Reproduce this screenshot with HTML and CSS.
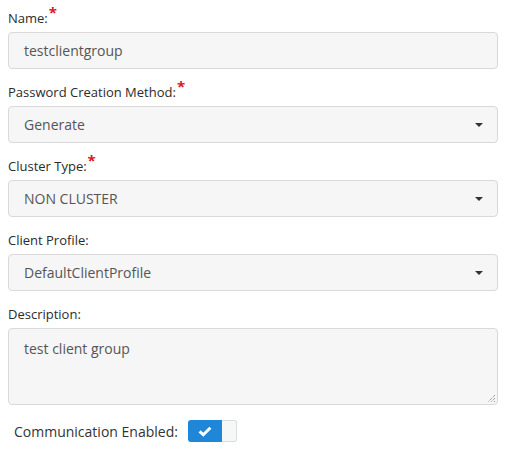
FILE: index.html
```html
<!DOCTYPE html>
<html>
<head>
<meta charset="utf-8">
<link rel="stylesheet" href="styles.css">
</head>
<body>
<form class="form">
  <div class="group">
    <label class="label">Name:<span class="req">*</span></label>
    <div class="field">testclientgroup</div>
  </div>
  <div class="group">
    <label class="label">Password Creation Method:<span class="req">*</span></label>
    <div class="field select">Generate<span class="caret"></span></div>
  </div>
  <div class="group">
    <label class="label">Cluster Type:<span class="req">*</span></label>
    <div class="field select">NON CLUSTER<span class="caret"></span></div>
  </div>
  <div class="group">
    <label class="label">Client Profile:</label>
    <div class="field select">DefaultClientProfile<span class="caret"></span></div>
  </div>
  <div class="group">
    <label class="label">Description:</label>
    <div class="field area">test client group
      <svg class="grip" width="9" height="9" viewBox="0 0 9 9"><path d="M8 1L1 8M8 4L4 8M8 7L7 8" stroke="#777" stroke-width="1" stroke-dasharray="1 1"/></svg>
    </div>
  </div>
  <div class="toggle-row">
    <span class="toggle-label">Communication Enabled:</span>
    <span class="toggle">
      <span class="toggle-on">
        <svg width="14" height="11" viewBox="0 0 14 11"><path d="M1.6 5.4L5.3 8.8L12.4 1.8" fill="none" stroke="#fff" stroke-width="3"/></svg>
      </span>
      <span class="toggle-knob"></span>
    </span>
  </div>
</form>
</body>
</html>
```
FILE: styles.css
```css
html, body {
  margin: 0;
  padding: 0;
  background: #fff;
}
body {
  font-family: "Open Sans", "Liberation Sans", sans-serif;
  color: #333;
}
.form {
  padding: 10px 10px 0 8px;
}
.group {
  display: flex;
  flex-direction: column;
  margin-bottom: 15px;
}
.label {
  font-size: 13px;
  line-height: 17px;
  height: 17px;
  margin-bottom: 5px;
  color: #2b2b2b;
}
.req {
  color: #e0141e;
  font-size: 15px;
  font-weight: bold;
  position: relative;
  top: -5px;
  margin-left: 1px;
  line-height: 0;
}
.field {
  position: relative;
  box-sizing: border-box;
  height: 37px;
  background: #f6f6f6;
  border: 1px solid #d9d9d9;
  border-radius: 4px;
  padding: 0 15px;
  font-size: 14px;
  line-height: 35px;
  color: #555;
}
.caret {
  position: absolute;
  right: 14px;
  top: 16px;
  width: 0;
  height: 0;
  border-left: 4px solid transparent;
  border-right: 4px solid transparent;
  border-top: 4px solid #333;
}
.area {
  height: 77px;
  line-height: 20px;
  padding-top: 10px;
}
.grip {
  position: absolute;
  right: 1px;
  bottom: 1px;
}
.toggle-row {
  display: flex;
  align-items: center;
  padding-left: 6px;
  margin-top: 0;
  height: 22px;
}
.toggle-label {
  font-size: 14px;
  color: #333;
  margin-right: 10px;
}
.toggle {
  display: flex;
  height: 22px;
  border-radius: 3px;
}
.toggle-on {
  width: 34px;
  height: 22px;
  background: #1f86d8;
  border-radius: 3px 0 0 3px;
  display: flex;
  align-items: center;
  justify-content: center;
}
.toggle-knob {
  width: 15px;
  height: 22px;
  box-sizing: border-box;
  background: #f7f7f7;
  border: 1px solid #d6dde4;
  border-left: none;
  border-radius: 0 3px 3px 0;
}
```
